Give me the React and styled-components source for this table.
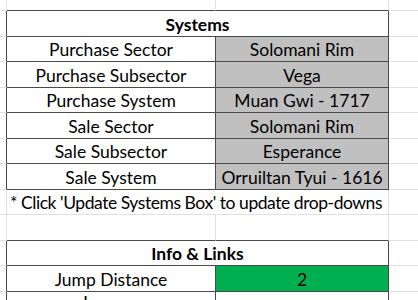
import React from "react";
import styled, { createGlobalStyle } from "styled-components";

const GlobalStyle = createGlobalStyle`
  body {
    margin: 0;
    background: #ffffff;
    font-family: Lato, "Liberation Sans", sans-serif;
  }
`;

const lines = {
  dark: "1px solid #4a4a4a",
  light: "1px solid #e1e1e1",
  none: "1px solid transparent",
};

const Sheet = styled.div`
  display: grid;
  grid-template-columns: 7px 209px 173px 1fr;
  grid-template-rows: 11px 26px 25px 26px 25px 26px 25px 26px 25px 26px 25px 26px 1fr;
  width: 418px;
  height: 300px;
  overflow: hidden;
  color: #000;
  font-size: 17.5px;
`;

const Cell = styled.div`
  box-sizing: border-box;
  display: flex;
  align-items: flex-end;
  justify-content: center;
  padding-bottom: 1px;
  line-height: 21px;
  white-space: nowrap;
  border-right: ${(p) => lines[p.$r || "light"]};
  border-bottom: ${(p) => lines[p.$b || "light"]};
  background: ${(p) => p.$fill || "transparent"};
  grid-column: ${(p) => (p.$span ? `span ${p.$span}` : "auto")};
`;

const Header = styled(Cell)`
  font-weight: 700;
`;

const Note = styled(Cell)`
  justify-content: flex-start;
  padding-left: 3px;
  letter-spacing: -0.45px;
`;

const Tail = styled(Cell)`
  border-right: none;
`;

const systems = [
  ["Purchase Sector", "Solomani Rim"],
  ["Purchase Subsector", "Vega"],
  ["Purchase System", "Muan Gwi - 1717"],
  ["Sale Sector", "Solomani Rim"],
  ["Sale Subsector", "Esperance"],
  ["Sale System", "Orruiltan Tyui - 1616"],
];

function DataRow({ label, value, fill }) {
  return (
    <>
      <Cell $r="dark" />
      <Cell $r="dark" $b="dark">{label}</Cell>
      <Cell $r="dark" $b="dark" $fill={fill}>{value}</Cell>
      <Tail />
    </>
  );
}

function HeaderRow({ title }) {
  return (
    <>
      <Cell $r="dark" />
      <Header $span={2} $r="dark" $b="dark">{title}</Header>
      <Tail />
    </>
  );
}

export default function App() {
  return (
    <>
      <GlobalStyle />
      <Sheet>
        <Cell />
        <Cell $b="dark" />
        <Cell $b="dark" />
        <Tail />

        <HeaderRow title="Systems" />
        {systems.map(([label, value]) => (
          <DataRow key={label} label={label} value={value} fill="#c0c0c0" />
        ))}

        <Cell />
        <Note $span={2}>* Click 'Update Systems Box' to update drop-downs</Note>
        <Tail />

        <Cell />
        <Cell $b="dark" />
        <Cell $b="dark" />
        <Tail />

        <HeaderRow title="Info & Links" />
        <DataRow label="Jump Distance" value="2" fill="#00b050" />
        <DataRow label="Journey" value="" />
      </Sheet>
    </>
  );
}
